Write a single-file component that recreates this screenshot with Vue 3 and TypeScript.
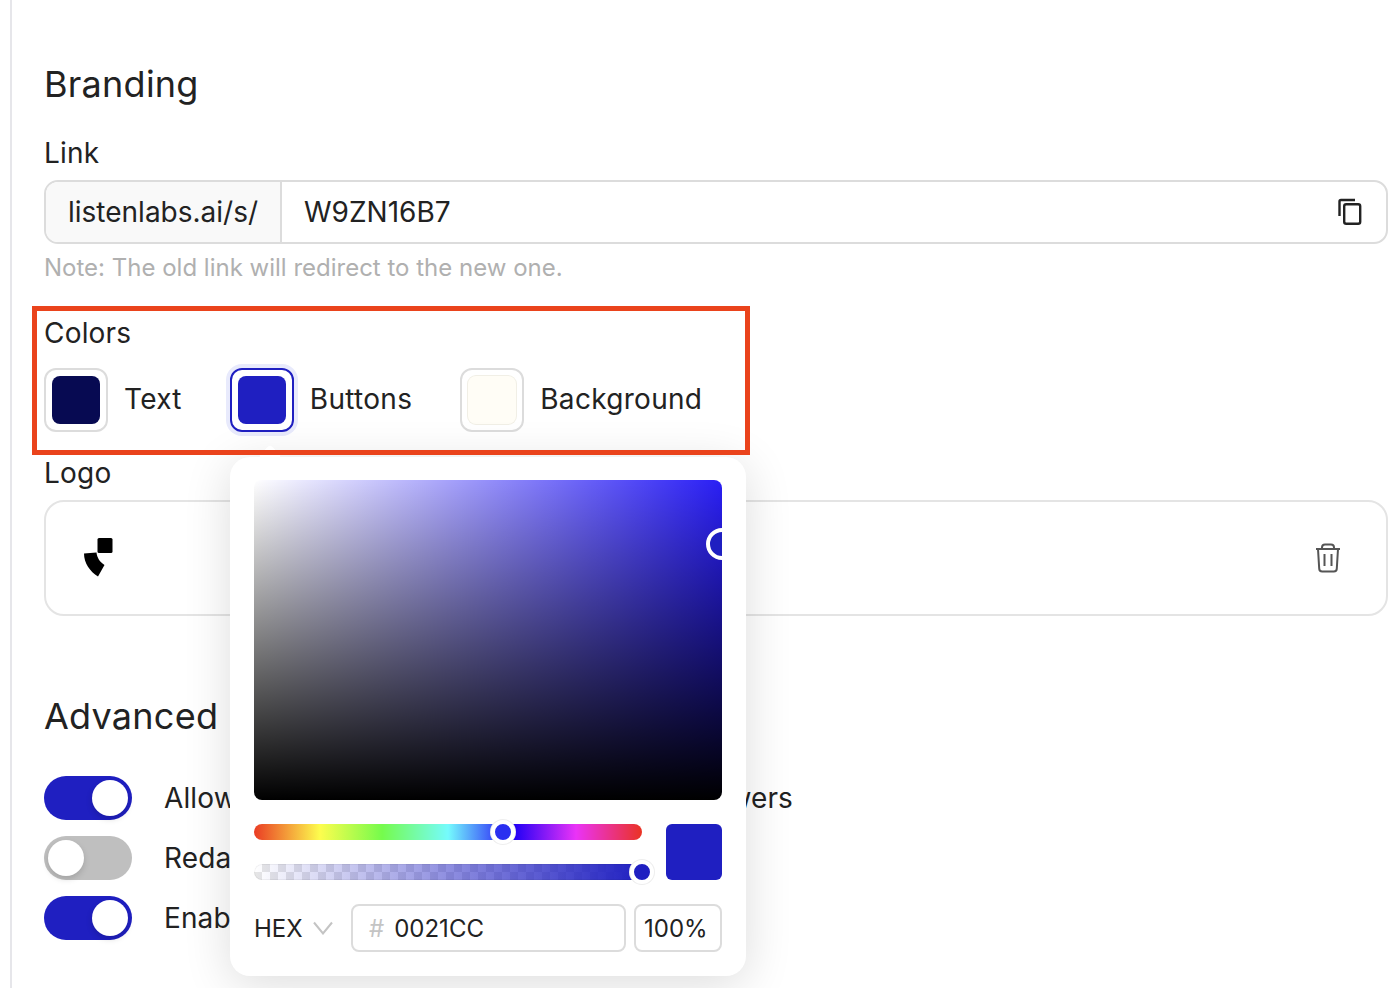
<script setup lang="ts">
const swatches = [
  { label: "Text", color: "#070a52", active: false },
  { label: "Buttons", color: "#1f1fc1", active: true },
  { label: "Background", color: "#fffdf6", active: false },
];

const toggles = [
  { label: "Allow participants to review all of their answers", on: true },
  { label: "Redact personal data", on: false },
  { label: "Enable voice captions", on: true },
];
</script>

<template>
  <div class="page">
    <h2 class="heading">Branding</h2>

    <div class="label link-label">Link</div>
    <div class="link-field">
      <div class="prefix">listenlabs.ai/s/</div>
      <div class="slug">W9ZN16B7</div>
      <svg class="copy" width="24" height="28" viewBox="0 0 24 28" fill="none" stroke="#222" stroke-width="2.4">
        <path d="M1.5 18V3.5A1.5 1.5 0 0 1 3 2h14" />
        <rect x="6.2" y="6.2" width="16" height="19.6" rx="2" />
      </svg>
    </div>
    <div class="note">Note: The old link will redirect to the new one.</div>

    <div class="label colors-label">Colors</div>
    <div class="swatches">
      <div v-for="s in swatches" :key="s.label" class="swatch-item">
        <div class="swatch" :class="{ active: s.active }">
          <div class="swatch-fill" :class="{ pale: s.label === 'Background' }" :style="{ background: s.color }"></div>
        </div>
        <span class="swatch-label">{{ s.label }}</span>
      </div>
    </div>

    <div class="label logo-label">Logo</div>
    <div class="logo-box">
      <svg width="32" height="42" viewBox="0 0 32 42">
        <rect x="14.5" y="1" width="15" height="15" rx="1.5" fill="#000" />
        <path d="M1 16.5 13.5 15.5C14 21 17 25 21.5 28L15 39.5C7 34.5 1 26 1 16.5Z" fill="#000" />
      </svg>
      <svg class="trash" width="26" height="30" viewBox="0 0 26 30" fill="none" stroke="#555" stroke-width="2">
        <path d="M1 6H25M7 6V4.5A3 3 0 0 1 10 1.5H16A3 3 0 0 1 19 4.5V6" />
        <path d="M3 6 4.2 25.5A3 3 0 0 0 7.2 28.5H18.8A3 3 0 0 0 21.8 25.5L23 6" />
        <path d="M9.5 11V23M16.5 11V23" />
      </svg>
    </div>

    <h2 class="heading advanced">Advanced</h2>
    <div class="toggles">
      <div v-for="t in toggles" :key="t.label" class="toggle-row">
        <div class="toggle" :class="{ on: t.on }">
          <div class="knob"></div>
        </div>
        <span class="toggle-label">{{ t.label }}</span>
      </div>
    </div>

    <div class="popover">
      <div class="arrow"></div>
      <div class="canvas">
        <div class="canvas-thumb"></div>
      </div>
      <div class="sliders">
        <div class="bars">
          <div class="bar hue">
            <div class="thumb hue-thumb"></div>
          </div>
          <div class="bar alpha">
            <div class="thumb alpha-thumb"></div>
          </div>
        </div>
        <div class="preview"></div>
      </div>
      <div class="inputs">
        <div class="mode">
          <span>HEX</span>
          <svg width="20" height="14" viewBox="0 0 20 14" fill="none" stroke="#c4c4c4" stroke-width="2">
            <path d="M1 1.5 10 12.5 19 1.5" />
          </svg>
        </div>
        <div class="hex-input"><span class="hash">#</span>0021CC</div>
        <div class="alpha-input">100%</div>
      </div>
    </div>

    <div class="highlight"></div>
  </div>
</template>

<style scoped>
.page {
  position: relative;
  box-sizing: border-box;
  width: 1378px;
  height: 988px;
  margin-left: 10px;
  padding-left: 32px;
  border-left: 2px solid #e6e6ea;
  overflow: hidden;
  color: #222;
  font-family: Inter, "Liberation Sans", sans-serif;
}

.heading {
  margin: 0;
  padding-top: 62px;
  font-size: 36px;
  font-weight: 430;
  letter-spacing: 0.25px;
  line-height: 44px;
}

.heading.advanced {
  padding-top: 78px;
}

.label {
  font-size: 28px;
  letter-spacing: 0.2px;
  line-height: 36px;
}

.link-label {
  margin-top: 29px;
}

.link-field {
  display: flex;
  align-items: center;
  box-sizing: border-box;
  height: 64px;
  margin-top: 9px;
  border: 2px solid #dcdcdc;
  border-radius: 14px;
  font-size: 28px;
  overflow: hidden;
}

.prefix {
  display: flex;
  align-items: center;
  box-sizing: border-box;
  width: 236px;
  height: 100%;
  padding-left: 22px;
  background: #f9f9f9;
  border-right: 2px solid #dcdcdc;
}

.slug {
  flex: 1;
  padding-left: 22px;
}

.copy {
  margin-right: 24px;
}

.note {
  margin-top: 8px;
  color: #b0b0b0;
  font-size: 24px;
  line-height: 32px;
}

.colors-label {
  margin-top: 31px;
}

.swatches {
  display: flex;
  gap: 48px;
  margin-top: 17px;
}

.swatch-item {
  display: flex;
  align-items: center;
  gap: 16px;
}

.swatch {
  display: flex;
  align-items: center;
  justify-content: center;
  box-sizing: border-box;
  width: 64px;
  height: 64px;
  border: 2px solid #dcdcdc;
  border-radius: 12px;
}

.swatch.active {
  border-color: #1f1fc1;
  box-shadow: 0 0 0 4px #e8eafc;
}

.swatch-fill {
  width: 48px;
  height: 48px;
  border-radius: 8px;
}

.swatch-fill.pale {
  box-shadow: 0 0 0 1px #f1efe6;
}

.swatch-label {
  padding-bottom: 2px;
  font-size: 28px;
  letter-spacing: 0.3px;
  line-height: 36px;
}

.logo-label {
  margin-top: 23px;
}

.logo-box {
  display: flex;
  align-items: center;
  justify-content: space-between;
  box-sizing: border-box;
  height: 116px;
  margin-top: 9px;
  padding: 0 45px 0 37px;
  border: 2px solid #e4e4e4;
  border-radius: 20px;
}

.toggles {
  display: flex;
  flex-direction: column;
  gap: 16px;
  margin-top: 38px;
}

.toggle-row {
  display: flex;
  align-items: center;
  gap: 32px;
}

.toggle {
  display: flex;
  justify-content: flex-start;
  box-sizing: border-box;
  width: 88px;
  height: 44px;
  padding: 4px;
  background: #bfbfbf;
  border-radius: 22px;
}

.toggle.on {
  justify-content: flex-end;
  background: #1f1fc1;
}

.knob {
  width: 36px;
  height: 36px;
  background: #fff;
  border-radius: 50%;
  box-shadow: 0 3px 6px rgba(0, 0, 0, 0.15);
}

.toggle-label {
  font-size: 28px;
  letter-spacing: 0.12px;
  line-height: 36px;
  white-space: nowrap;
}

.popover {
  position: absolute;
  top: 457px;
  left: 218px;
  box-sizing: border-box;
  width: 516px;
  height: 519px;
  padding: 23px 24px 0;
  background: #fff;
  border-radius: 20px;
  box-shadow: 0 8px 48px rgba(0, 0, 0, 0.14);
}

.arrow {
  position: absolute;
  top: -9px;
  left: 32px;
  width: 16px;
  height: 16px;
  background: #fff;
  border-radius: 3px;
  transform: rotate(45deg);
}

.canvas {
  position: relative;
  height: 320px;
  overflow: hidden;
  border-radius: 8px;
  background:
    linear-gradient(to bottom, rgba(0, 0, 0, 0), #000),
    linear-gradient(to right, #fff, rgba(255, 255, 255, 0)),
    #2a1ff5;
}

.canvas-thumb {
  position: absolute;
  top: 48px;
  left: 452px;
  box-sizing: border-box;
  width: 32px;
  height: 32px;
  background: #1f1fc1;
  border: 4px solid #fff;
  border-radius: 50%;
}

.sliders {
  display: flex;
  justify-content: space-between;
  margin-top: 24px;
}

.bars {
  display: flex;
  flex-direction: column;
  gap: 24px;
  width: 388px;
}

.bar {
  position: relative;
  height: 16px;
  border-radius: 8px;
}

.hue {
  background: linear-gradient(
    to right,
    #ea3c24 0%,
    #fdfd4e 17%,
    #75fb4c 33%,
    #75fbfd 50%,
    #2000f5 67%,
    #ea33f7 83%,
    #ea3323 100%
  );
}

.alpha {
  background:
    linear-gradient(to right, rgba(31, 31, 193, 0), #1f1fc1),
    repeating-conic-gradient(#e6e6e6 0 25%, #fff 0 50%) 0 0 / 16px 16px;
  box-shadow: inset 0 0 0 1px rgba(0, 0, 0, 0.05);
}

.thumb {
  position: absolute;
  top: -4px;
  box-sizing: border-box;
  width: 24px;
  height: 24px;
  border: 4px solid #fff;
  border-radius: 50%;
  box-shadow: 0 0 0 1px #eee;
}

.hue-thumb {
  left: 237px;
  background: #2a2ff0;
}

.alpha-thumb {
  left: 376px;
  background: #1f1fc1;
}

.preview {
  width: 56px;
  height: 56px;
  background: #1f1fc1;
  border-radius: 6px;
}

.inputs {
  display: flex;
  align-items: center;
  margin-top: 24px;
  font-size: 24px;
}

.mode {
  display: flex;
  align-items: center;
  gap: 10px;
  width: 97px;
}

.hex-input,
.alpha-input {
  display: flex;
  align-items: center;
  box-sizing: border-box;
  height: 48px;
  border: 2px solid #dcdcdc;
  border-radius: 8px;
}

.hex-input {
  width: 275px;
  padding-left: 16px;
}

.hash {
  margin-right: 10px;
  color: #c4c4c4;
}

.alpha-input {
  width: 88px;
  margin-left: 8px;
  padding-left: 8px;
}

.highlight {
  position: absolute;
  top: 306px;
  left: 20px;
  box-sizing: border-box;
  width: 718px;
  height: 149px;
  border: 5px solid #ea431c;
  pointer-events: none;
}
</style>
